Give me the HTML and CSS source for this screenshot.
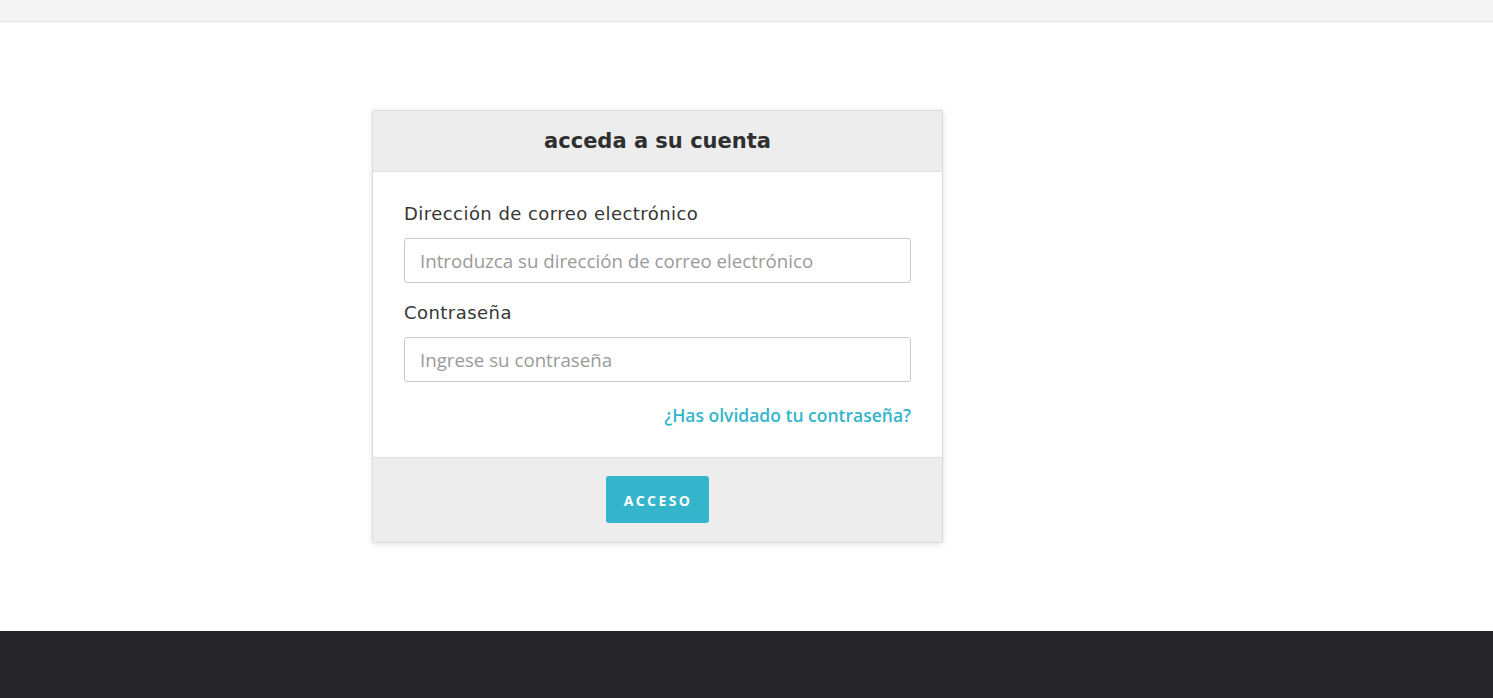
FILE: index.html
```html
<!DOCTYPE html>
<html lang="es">
<head>
<meta charset="utf-8">
<title>Acceso</title>
<link rel="stylesheet" href="styles.css">
</head>
<body>
<header class="topbar"></header>
<main class="main">
  <section class="card">
    <div class="card-header">
      <h1 class="card-title">acceda a su cuenta</h1>
    </div>
    <form class="card-body">
      <label class="field-label" for="email">Dirección de correo electrónico</label>
      <input class="field-input" id="email" type="email" placeholder="Introduzca su dirección de correo electrónico">
      <label class="field-label second" for="pass">Contraseña</label>
      <input class="field-input" id="pass" type="password" placeholder="Ingrese su contraseña">
      <div class="forgot-row"><a class="forgot" href="#">¿Has olvidado tu contraseña?</a></div>
    </form>
    <div class="card-footer">
      <button class="btn" type="button">ACCESO</button>
    </div>
  </section>
</main>
<footer class="footer"></footer>
</body>
</html>
```
FILE: styles.css
```css
* { box-sizing: border-box; }
html, body { margin: 0; padding: 0; }
body {
  background: #fff;
  font-family: "Open Sans", sans-serif;
  color: #333;
}
.topbar {
  height: 22px;
  background: #f4f4f4;
  border-bottom: 1px solid #e3e3e3;
}
.main {
  padding-top: 88px;
  height: 609px;
}
.card {
  margin-left: 372px;
  width: 571px;
  border: 1px solid #dcdcdc;
  border-radius: 2px;
  box-shadow: 0 1px 6px rgba(0,0,0,0.12);
  background: #fff;
}
.card-header {
  height: 61px;
  background: #ededed;
  border-bottom: 1px solid #e0e0e0;
  display: flex;
  align-items: center;
  justify-content: center;
}
.card-title {
  margin: 0;
  font-family: "DejaVu Sans", sans-serif;
  font-weight: bold;
  font-size: 21px;
  color: #2f2f2f;
}
.card-body {
  padding: 30px 31px 30px 31px;
  display: flex;
  flex-direction: column;
  margin: 0;
}
.field-label {
  font-family: "DejaVu Sans", sans-serif;
  font-size: 18px;
  letter-spacing: 0.45px;
  color: #363636;
  line-height: 24px;
  margin-bottom: 12px;
}
.field-label.second { margin-top: 18px; }
.field-input {
  height: 45px;
  width: 100%;
  border: 1px solid #c8c8c8;
  border-radius: 3px;
  padding: 0 15px;
  font-family: "Open Sans", sans-serif;
  font-size: 18.7px;
  color: #333;
  outline: none;
}
.field-input::placeholder { color: #9a9a9a; }
.forgot-row {
  display: flex;
  justify-content: flex-end;
  margin-top: 21px;
}
.forgot {
  font-family: "Open Sans", sans-serif;
  font-weight: 600;
  font-size: 17.5px;
  color: #34b5cc;
  text-decoration: none;
  line-height: 24px;
}
.card-footer {
  height: 85px;
  background: #ededed;
  border-top: 1px solid #e0e0e0;
  display: flex;
  justify-content: center;
  align-items: flex-start;
  padding-top: 18px;
}
.btn {
  width: 103px;
  height: 47px;
  background: #34b5cc;
  border: none;
  border-radius: 3px;
  color: #fff;
  font-family: "Open Sans", sans-serif;
  font-weight: 700;
  font-size: 14px;
  letter-spacing: 2.4px;
  padding: 2px 0 0 1px;
}
.footer {
  height: 67px;
  background: #26252a;
}
```
